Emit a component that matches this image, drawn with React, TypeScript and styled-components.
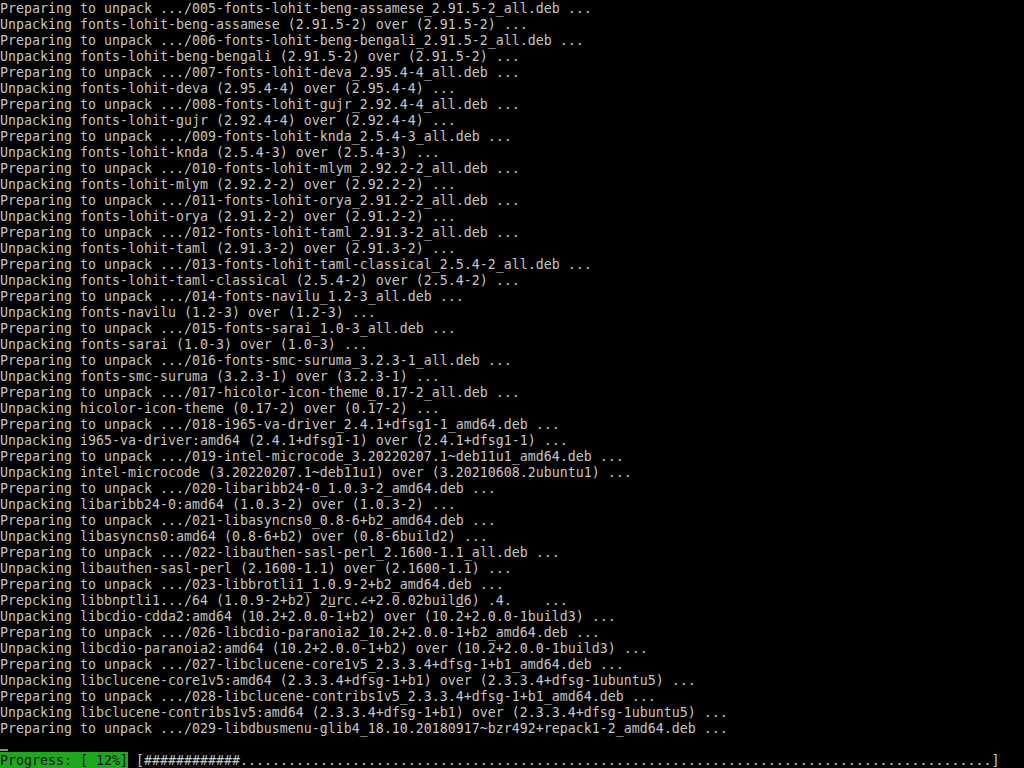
import React from "react";
import styled, { createGlobalStyle } from "styled-components";

const Global = createGlobalStyle`
  html, body { margin: 0; padding: 0; background: #000; }
  body { width: 1024px; height: 768px; overflow: hidden; }
`;

const Screen = styled.div`
  width: 1024px;
  height: 768px;
  background: #000;
  color: #c4c4c4;
  font-family: "DejaVu Sans Mono", "Liberation Mono", monospace;
  font-size: 13.29px;
  display: flex;
  flex-direction: column;
  overflow: hidden;
`;

const Line = styled.div`
  height: 16px;
  line-height: 16px;
  padding-top: 1px;
  box-sizing: border-box;
  white-space: pre;
`;

const Cell = styled.span<{ $under?: boolean }>`
  display: inline-block;
  width: 8px;
  text-align: center;
  overflow: hidden;
  vertical-align: top;
  text-decoration: ${(p) => (p.$under ? "underline" : "none")};
`;

const Under = styled.span`
  text-decoration: underline;
`;

const CursorRow = styled.div`
  height: 16px;
  display: flex;
  align-items: flex-end;
  padding-bottom: 1px;
  box-sizing: border-box;
`;

const Cursor = styled.div`
  width: 8px;
  height: 2px;
  background: #8a8a8a;
`;

const ProgressRow = styled.div`
  height: 16px;
  line-height: 16px;
  padding-top: 1px;
  box-sizing: border-box;
  white-space: pre;
  display: flex;
`;

const ProgressLabel = styled.span`
  background: #1fa81f;
  color: #061806;
  width: 128px;
  margin-top: -1px;
  padding-top: 1px;
`;

const lines = [
  "Preparing to unpack .../005-fonts-lohit-beng-assamese_2.91.5-2_all.deb ...",
  "Unpacking fonts-lohit-beng-assamese (2.91.5-2) over (2.91.5-2) ...",
  "Preparing to unpack .../006-fonts-lohit-beng-bengali_2.91.5-2_all.deb ...",
  "Unpacking fonts-lohit-beng-bengali (2.91.5-2) over (2.91.5-2) ...",
  "Preparing to unpack .../007-fonts-lohit-deva_2.95.4-4_all.deb ...",
  "Unpacking fonts-lohit-deva (2.95.4-4) over (2.95.4-4) ...",
  "Preparing to unpack .../008-fonts-lohit-gujr_2.92.4-4_all.deb ...",
  "Unpacking fonts-lohit-gujr (2.92.4-4) over (2.92.4-4) ...",
  "Preparing to unpack .../009-fonts-lohit-knda_2.5.4-3_all.deb ...",
  "Unpacking fonts-lohit-knda (2.5.4-3) over (2.5.4-3) ...",
  "Preparing to unpack .../010-fonts-lohit-mlym_2.92.2-2_all.deb ...",
  "Unpacking fonts-lohit-mlym (2.92.2-2) over (2.92.2-2) ...",
  "Preparing to unpack .../011-fonts-lohit-orya_2.91.2-2_all.deb ...",
  "Unpacking fonts-lohit-orya (2.91.2-2) over (2.91.2-2) ...",
  "Preparing to unpack .../012-fonts-lohit-taml_2.91.3-2_all.deb ...",
  "Unpacking fonts-lohit-taml (2.91.3-2) over (2.91.3-2) ...",
  "Preparing to unpack .../013-fonts-lohit-taml-classical_2.5.4-2_all.deb ...",
  "Unpacking fonts-lohit-taml-classical (2.5.4-2) over (2.5.4-2) ...",
  "Preparing to unpack .../014-fonts-navilu_1.2-3_all.deb ...",
  "Unpacking fonts-navilu (1.2-3) over (1.2-3) ...",
  "Preparing to unpack .../015-fonts-sarai_1.0-3_all.deb ...",
  "Unpacking fonts-sarai (1.0-3) over (1.0-3) ...",
  "Preparing to unpack .../016-fonts-smc-suruma_3.2.3-1_all.deb ...",
  "Unpacking fonts-smc-suruma (3.2.3-1) over (3.2.3-1) ...",
  "Preparing to unpack .../017-hicolor-icon-theme_0.17-2_all.deb ...",
  "Unpacking hicolor-icon-theme (0.17-2) over (0.17-2) ...",
  "Preparing to unpack .../018-i965-va-driver_2.4.1+dfsg1-1_amd64.deb ...",
  "Unpacking i965-va-driver:amd64 (2.4.1+dfsg1-1) over (2.4.1+dfsg1-1) ...",
  "Preparing to unpack .../019-intel-microcode_3.20220207.1~deb11u1_amd64.deb ...",
  "Unpacking intel-microcode (3.20220207.1~deb11u1) over (3.20210608.2ubuntu1) ...",
  "Preparing to unpack .../020-libaribb24-0_1.0.3-2_amd64.deb ...",
  "Unpacking libaribb24-0:amd64 (1.0.3-2) over (1.0.3-2) ...",
  "Preparing to unpack .../021-libasyncns0_0.8-6+b2_amd64.deb ...",
  "Unpacking libasyncns0:amd64 (0.8-6+b2) over (0.8-6build2) ...",
  "Preparing to unpack .../022-libauthen-sasl-perl_2.1600-1.1_all.deb ...",
  "Unpacking libauthen-sasl-perl (2.1600-1.1) over (2.1600-1.1) ...",
  "Preparing to unpack .../023-libbrotli1_1.0.9-2+b2_amd64.deb ...",
  null,
  "Unpacking libcdio-cdda2:amd64 (10.2+2.0.0-1+b2) over (10.2+2.0.0-1build3) ...",
  "Preparing to unpack .../026-libcdio-paranoia2_10.2+2.0.0-1+b2_amd64.deb ...",
  "Unpacking libcdio-paranoia2:amd64 (10.2+2.0.0-1+b2) over (10.2+2.0.0-1build3) ...",
  "Preparing to unpack .../027-libclucene-core1v5_2.3.3.4+dfsg-1+b1_amd64.deb ...",
  "Unpacking libclucene-core1v5:amd64 (2.3.3.4+dfsg-1+b1) over (2.3.3.4+dfsg-1ubuntu5) ...",
  "Preparing to unpack .../028-libclucene-contribs1v5_2.3.3.4+dfsg-1+b1_amd64.deb ...",
  "Unpacking libclucene-contribs1v5:amd64 (2.3.3.4+dfsg-1+b1) over (2.3.3.4+dfsg-1ubuntu5) ...",
  "Preparing to unpack .../029-libdbusmenu-glib4_18.10.20180917~bzr492+repack1-2_amd64.deb ...",
];

const GarbledLine = () => (
  <Line>
    {"Prepcking libbnptli1.../64 (1.0.9-2+b2) "}
    <Cell>2</Cell>
    <Cell $under>u</Cell>
    <Cell>r</Cell>
    <Cell>c</Cell>
    {"."}
    <Cell>∠</Cell>
    {"+2.0.02buil"}
    <Under>d</Under>
    {"6) .4.    ..."}
  </Line>
);

const percent = 12;
const barWidth = 106;
const filled = 12;

export default function App() {
  return (
    <>
      <Global />
      <Screen>
        {lines.map((l, i) =>
          l === null ? <GarbledLine key={i} /> : <Line key={i}>{l}</Line>
        )}
        <CursorRow>
          <Cursor />
        </CursorRow>
        <ProgressRow>
          <ProgressLabel>{`Progress: [ ${percent}%]`}</ProgressLabel>
          {" [" + "#".repeat(filled) + ".".repeat(barWidth - filled) + "]"}
        </ProgressRow>
      </Screen>
    </>
  );
}
